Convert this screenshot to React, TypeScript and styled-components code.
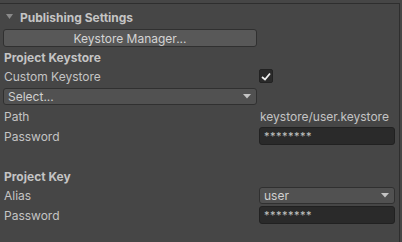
import styled, { createGlobalStyle } from "styled-components";

const Global = createGlobalStyle`
  html, body {
    margin: 0;
    padding: 0;
    background: #464646;
  }
  body {
    font-family: Inter, "Noto Sans", sans-serif;
    font-size: 12px;
    color: #c4c4c4;
  }
`

const App = () => {
    return (
        <Page>
            <Global />
            <Panel>
                <Foldout>
                    <svg width="8" height="6" viewBox="0 0 8 6">
                        <polygon points="0,0 7,0 3.5,5" fill="#8a8a8a" />
                    </svg>
                    <FoldTitle>Publishing Settings</FoldTitle>
                </Foldout>
                <WideButton>Keystore Manager...</WideButton>

                <Header mt={1}>Project Keystore</Header>
                <Row mt={1}>
                    <Label>Custom Keystore</Label>
                    <Check>
                        <svg width="10" height="9" viewBox="0 0 10 9">
                            <polyline points="1,5 4,7.5 9,1.5" fill="none" stroke="#f0f0f0" strokeWidth="1.8" />
                        </svg>
                    </Check>
                </Row>
                <Row mt={2}>
                    <Dropdown wide>
                        <span>Select...</span>
                        <Arrow />
                    </Dropdown>
                </Row>
                <Row mt={2}>
                    <Label>Path</Label>
                    <Value>keystore/user.keystore</Value>
                </Row>
                <Row mt={2}>
                    <Label>Password</Label>
                    <Field>********</Field>
                </Row>

                <Header mt={22}>Project Key</Header>
                <Row mt={1}>
                    <Label>Alias</Label>
                    <Dropdown>
                        <span>user</span>
                        <Arrow />
                    </Dropdown>
                </Row>
                <Row mt={2}>
                    <Label>Password</Label>
                    <Field>********</Field>
                </Row>
            </Panel>
        </Page>
    )
}

const Arrow = () => (
    <svg width="8" height="5" viewBox="0 0 8 5">
        <polygon points="0,0 8,0 4,4.5" fill="#c4c4c4" />
    </svg>
)

const Page = styled.div`
width: 402px;
height: 242px;
overflow: hidden;
padding-top: 3px;
box-sizing: border-box;
`

const Panel = styled.div`
width: 400px;
height: 239px;
box-sizing: border-box;
border-top: 1px solid #2e2e2e;
border-right: 1px solid #2e2e2e;
padding: 0 4px 0 3px;
display: flex;
flex-direction: column;
`

const Foldout = styled.div`
height: 18px;
margin-top: 4px;
display: flex;
align-items: center;
gap: 6px;
padding-left: 3px;
`

const FoldTitle = styled.span`
font-weight: 700;
font-size: 12px;
color: #c4c4c4;
`

const WideButton = styled.div`
margin-top: 3px;
width: 254px;
height: 18px;
box-sizing: border-box;
background: #585858;
border: 1px solid #303030;
border-radius: 3px;
display: flex;
align-items: center;
justify-content: center;
color: #d4d4d4;
`

const Header = styled.div<{ mt: number }>`
margin-top: ${p => p.mt}px;
height: 18px;
display: flex;
align-items: center;
padding-left: 1px;
font-weight: 700;
`

const Row = styled.div<{ mt: number }>`
margin-top: ${p => p.mt}px;
height: 18px;
display: flex;
align-items: center;
`

const Label = styled.span`
width: 256px;
flex: none;
padding-left: 1px;
box-sizing: border-box;
`

const Value = styled.span`
padding-left: 1px;
color: #c4c4c4;
`

const Check = styled.div`
width: 14px;
height: 14px;
box-sizing: border-box;
background: #2a2a2a;
border: 1px solid #222;
border-radius: 2px;
display: flex;
align-items: center;
justify-content: center;
`

const Dropdown = styled.div<{ wide?: boolean }>`
width: ${p => (p.wide ? 254 : 136)}px;
height: 17px;
box-sizing: border-box;
background: #515151;
border: 1px solid #303030;
border-radius: 3px;
display: flex;
align-items: center;
justify-content: space-between;
padding: 0 5px 0 4px;
color: #d0d0d0;
`

const Field = styled.div`
width: 136px;
height: 18px;
box-sizing: border-box;
background: #2a2a2a;
border: 1px solid #212121;
border-radius: 3px;
display: flex;
align-items: center;
padding: 0 4px;
color: #c4c4c4;
font-size: 11px;
letter-spacing: 0.5px;
`

export default App
